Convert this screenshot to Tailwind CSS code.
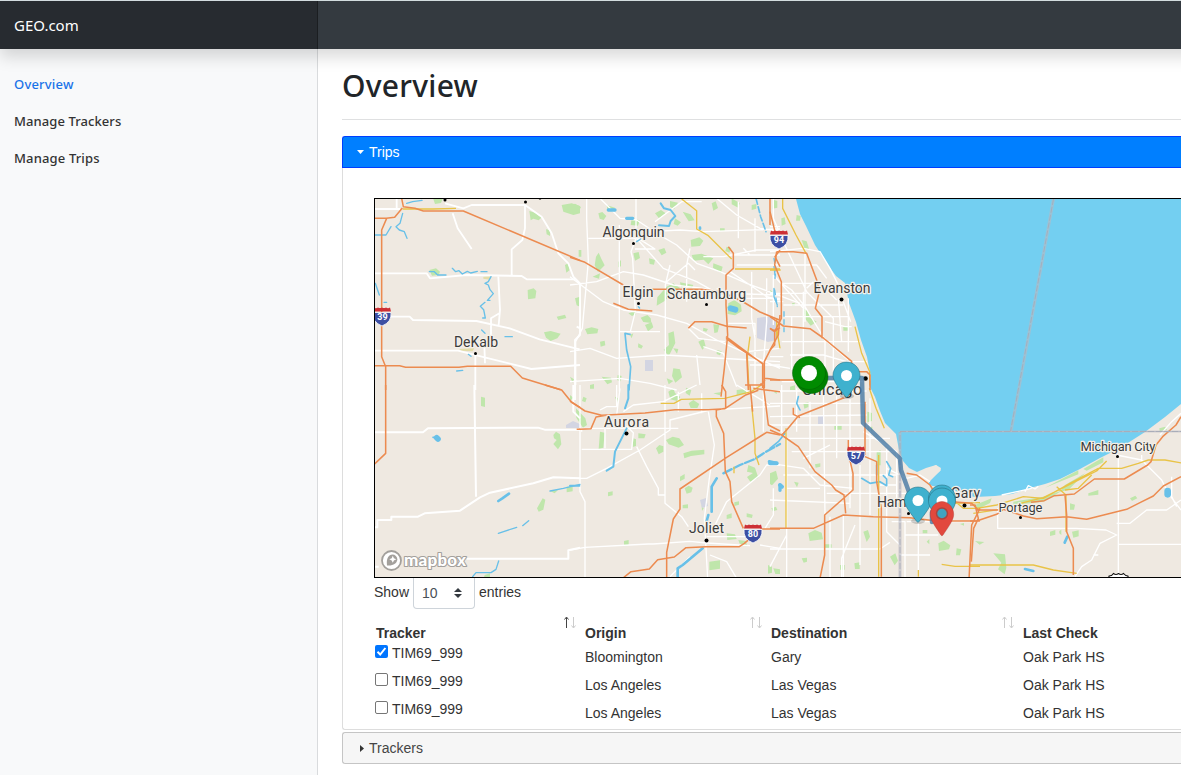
<!DOCTYPE html>
<html lang="en">
<head>
<meta charset="utf-8">
<title>GEO.com</title>
<script src="https://cdn.jsdelivr.net/npm/@tailwindcss/browser@4"></script>
</head>
<body class="w-[1181px] h-[775px] overflow-hidden bg-white flex flex-col font-['Noto_Sans',sans-serif] text-[#212529]">
<header class="relative z-10 w-[1240px] h-[49px] shrink-0 flex border-t border-[#d3dcdf] bg-[#343a40] shadow-[0_8px_16px_rgba(0,0,0,0.15)]">
  <div class="w-[318px] bg-[#272b30] border-r border-[#1b1e21] pl-[14px] flex items-center text-white text-[15px] pt-px"><span>GEO.com</span></div>
</header>
<div class="flex flex-1 min-h-0">
  <nav class="w-[318px] shrink-0 bg-[#f8f9fa] border-r border-[#d9dbdd] pl-[14px] pt-[17px] text-[13px] font-medium text-[#333]">
    <a class="flex h-[37px] items-center text-[#1a73e8] tracking-[0.2px]">Overview</a>
    <a class="flex h-[37px] items-center tracking-[0.08px]">Manage Trackers</a>
    <a class="flex h-[37px] items-center tracking-[0.15px]">Manage Trips</a>
  </nav>
  <main class="flex-1 min-w-0 pl-6">
    <div class="h-[71px] border-b border-[#dfe0e1] pt-[13px]"><h1 class="text-[30px] leading-[48px] font-medium tracking-[0.25px]">Overview</h1></div>
    <div class="mt-4 font-['Liberation_Sans',sans-serif] text-sm text-[#333]">
      <div class="h-8 bg-[#007fff] border border-r-0 border-[#003eff] rounded-tl-[3px] text-white flex items-center pl-[14px] gap-[5px]">
        <svg width="7" height="4" viewBox="0 0 7 4"><path d="M0 0h7L3.500 4z" fill="#fff"/></svg><span>Trips</span>
      </div>
      <div class="h-[562px] border-l border-b border-[#ddd] pt-[30px] pl-[31px] rounded-bl-[3px]">
        <div class="h-[380px] border border-r-0 border-black overflow-hidden">
        <svg class="block" width="806" height="378" viewBox="375 199 806 378" fill="none" stroke-linejoin="round">
          <rect x="375" y="199" width="806" height="378" fill="#efe9e1"/>
          <!-- parks -->
          <g fill="#bfe6ab">
            <g transform="translate(370 195) scale(.33333)">
              <path d="M575 30l30-5 25 8v22l-20 5-30-10zM478 48l18 5 18 15-8 8-16-5-8 5zM528 103l12 2v18l-10-5zM473 285l18-5 8 8-3 22-22 3zM585 210l10-5 4 20-10 8zM522 412l20-4 30 8-10 14-20 8-14-10zM560 365l25-6 4 10-24 6zM615 310l15-5v30l-10-4zM626 165h8v20h-8zM178 225l20-5 12 10-4 10-20 2zM190 12h28l-5 12-18 3z"/>
              <path fill="#e3dda9" d="M268 462l45-3-5 10-35-2zM340 245l25-3-5 12-20-3z"/>
            </g>
            <g transform="translate(570 195) scale(.33333)">
              <path d="M0 32l15-6 18 10-8 16-25 3zM85 55l12-4 12 12-8 12-12-4zM110 30l25 8-6 10-17-5zM185 70l24 6-5 16-22-2zM255 55l18-10 14 10-20 15zM300 18l24 5-12 20-12-8zM338 50l24 8 12 18-18 3zM315 70l18 12-10 10-12-5zM362 135l26-8 12 10-10 16-26 2zM365 180l30-4 35 14-15 18-14-14-30 3zM265 165l18-6 6 14-14 8zM190 175l16-4 4 18-15 8zM145 200l8-4v18l-8 3zM78 185l8-12 8 18 10 20-20 20-10-20zM68 245l22-10-3 16zM237 190l18 5-3 14-13-2zM425 25l12-6 7 20-14 8zM450 100h14v8h-14zM485 10l24 14-4 14-20-10zM470 155l14 4-6 14-12-5zM545 30l14-3v14l-14 4zM430 205l28 10-5 18-24-15zM290 275l20-10 20 14-8 25-18-10-20 24-24 14 2-25zM330 262l40 8-5 10-32-4zM475 325l18-10 20 14 2 20-20 12-22-4zM470 340l8-15 10 8zM45 402l20-5 20 5-3 13-30 3zM212 368l20-8 10 10 2 14-24-3zM225 390l20-8 5 15-16 12zM175 355l18-5 5 8-12 5zM180 420l10-5-5 15zM295 415l16-6 5 35-20 40-15-20 16-14zM310 460l15 2-4 14zM90 440l14-3 2 14-14 4zM205 445l14 8-5 8-10-4zM385 440l16-8 6 22-10 10zM430 388l18 2-5 22-10 2zM400 398l14 4-5 8-10-3zM440 465l15 4-5 12-10-4zM95 545l28 3 3 14-14 6zM143 540l12 3-4 16-10-4zM310 520l20 3 6 24-20 16-10-20zM290 550l20 8-14 10zM60 570l12-3v14h-12zM0 545l12 8-4 10z"/>
            </g>
            <g transform="translate(770 195) scale(.33333)">
              <path d="M10 14l12 4v20l-14 3zM34 70l10-3 3 20-12 5zM80 60l12 3-2 14h-12zM95 135l15 4 8 25-14-3zM98 338l16 10 6 20 20 12-18 12-16-20zM220 395l14 2v10h-14zM66 325l8-2v10h-8zM273 425h12v5h-12zM60 575l15-4v14h-15zM0 285l8 5-5 14z"/>
            </g>
            <g transform="translate(970 195) scale(.33333)">
              <path d="M15 930l50-20-5 14-40 20zM130 920l90-15 60-20-60 35-90 10zM225 878l100-52v12l-100 40zM340 822l60-35v15l-50 25zM285 870l60-35-50 50-25 5zM355 895l30-10v14l-30 3zM300 925l15 4-3 15h-12zM240 1010l16-5v14l-16 4zM268 1008l6-4v16l-6-5zM306 1010l20-4v18l-16 4zM480 910l16-8 6 8-16 8zM568 700l18-5 5 10-22 3zM70 1075l35 3 4 40-5 20-20-15 10-20zM15 1038l28 3-14 8z"/>
            </g>
            <g transform="translate(370 385) scale(.33333)">
              <path d="M333 35l12 3v28l-12-3zM550 150l8-10 12 8 4 30-10 15-14-16 10-12-8-5zM518 340l8 4-6 30-14 6-5-10zM540 318l24-3-10 10zM590 305h18v14l-18 3zM600 30l10 8-10 10zM344 570l16-5v12h-18z"/>
            </g>
            <g transform="translate(570 385) scale(.33333)">
              <path d="M18 70l28 30 5 20-12 8-20-30zM40 35l10 5-4 12-10-4zM90 140l14 3-4 45-14 4zM135 35l10 5-4 14zM205 145l22 3-4 12h-18zM190 160l8 3v20l-10 3zM288 165l20-10 20 5 14 20-16 8-30-10zM258 190l10-10 12 4v16l-14 8zM340 205l25-8 38-3v14l-40 5-20 7zM295 20l15-10 5 14 16 12-10 12-20-5zM348 8l16 8-5 16-12-8zM370 45l18 12-6 12h-20l-6-14zM430 25l25-4-6 10zM500 15l28-3v14l-28 4zM610 20l10-3v10zM330 275l14-8v14l-14 8zM344 310l12-8 12 6-4 14-14 4zM338 360l16-2v12h-16zM114 322l14-3v12l-14 3zM162 468l14-3v14l-14 3zM418 530l32-4v25l-32 5zM470 390l15-5v14l-15 3zM530 385l18 4-2 10-16-3zM493 352l14-3v10l-14 4zM470 445l25 3 5 14-28 3zM505 465l22 3 4 12-22-4zM535 240l20 8 10 30-24 12-10-14 18-12-18-4zM395 360l6 10-5 8zM594 540l12 5v18l-12 3zM610 550l20 3v14h-14z"/>
            </g>
            <g transform="translate(770 385) scale(.33333)">
              <path d="M100 55l15-3v14l-12 5zM193 122h22v12h-22zM292 80l14 4v24l-14 4zM295 125h12v12h-12zM135 238l16-3v10l-14 3zM115 445l20-10 20 8 4 20-40 5zM280 440l14-5 6 20-10 16zM0 265l18-8 6 24-18 20-6-4zM165 478h20v10h-20zM72 290l14 3-5 14zM4 370l14-5 4 10-14 4zM95 520l16-2v12l-10 3zM253 535l16-3v20h-14zM210 540h14v14h-14zM505 475l16-8 20 14-4 12-30 5zM458 435h14v10h-14zM560 490l14 3-4 18h-12zM470 470l8-8v16zM360 515l16-10 8 22-10 14zM320 200l12-4v45h-12zM570 417l12-3v8zM375 350l20 5-10 10z"/>
            </g>
          </g>
          <g fill="#d3d5e2">
            <path d="M757 318l15-2 4 6v18l-8 2-11-4zM645 360h8v11h-8zM566 425l7-4 7 3v4h-14zM700 500l6-2 2 8-6 2zM818 416h6v8h-6z"/>
          </g>
          <!-- lake -->
          <path fill="#73cff1" d="M796 199L800 214 806 226 815 245 828 265 836 276 845 283 849 303 856 322 861 340 867 357 871 378 869 385 875 397 880 411 885 423 896 434 899 450 903 461 909 468 917 472 926 468 936 465 941 470 932 479 925 485 940 487 952 488 960 494 975 497 995 496 1012 494 1030 488 1045 484 1060 479 1080 469 1100 458 1120 448 1145 432 1165 417 1181 404V199z"/>
          <path fill="#efe9e1" d="M914 472l11 3 4-6 7-4 5 3-1 3-7 6-5 7 9 4-10 4-8-6z"/>
          <!-- local roads -->
          <g stroke="#fff" stroke-width="4">
            <g transform="translate(370 195) scale(.33333)">
              <path stroke-width="5.500" d="M14 42H90M80 10v32M225 25l55 15 25-10 160 0 50 35 30 50 20 60 30 30 15 40 20 20v155l-15 15v180M248 55l15 45 42 62M465 30v70l-8 35-32 28v80M14 235H170l10 15 110-10 165 3 15 10 145 0M385 245l5 100-4 45M14 365h105l10 10 190 3 100 22 90 33 120 30M14 467h250l80 20 140 35 146-12M345 505l-2-55 20-30v-50l25-15M316 475v110M620 395l12 6"/>
            </g>
            <g transform="translate(570 195) scale(.33333)">
              <path d="M198 10v120l-15 40 5 20 8 160-15 60h-30M148 90v500M0 245l100 75 60 25 100 15 90 25 90 50 190 85M0 470l60-10 80 30 145-10 345 20M0 560l150-10 90 15 80 20M10 10h120M90 10l60 60 50 5 60 40 60 35 60 55 70 25 80 35 160 60M50 10v60l5 130-18 200-20 40v130M0 270l80-10 80-30 60 10 90 30 90 10 60 15 170 5M200 130l80 90 100 40 90 50M55 130h150l50 32h-60M255 80l80-60h60M240 110l90-5 70 5 230-8M505 20v110M360 160l-10 50v110M300 210l-14 60v260M285 265l70-60 20 20M440 10l60 50 70 40 60 10M400 185h60l100-20 70 0M480 230l60 40 50 35 40 10M480 180h80M555 70v100M590 250v130l-10 130M545 230v140l10 60v160M610 240v150M470 290l50 20h110M520 160l20 20h90M500 210h130M475 385h80v35M355 400l30 30 80 10M400 455l60 20 40 100M150 410l120 0M440 280l30 10M530 470l100-10M540 510h90M380 480l10 90"/>
            </g>
            <g transform="translate(770 195) scale(.33333)">
              <path d="M10 10v60l30 70 70 150 80 80v160M0 170l100-10 50 10 30 50 30 60M30 95H0M105 170v210M0 295h110M30 210h110l30 40M30 265l120 0 50 50M35 265l30 20 40 50 60 100 70 60M40 330h180M0 320h40M40 365h195M65 365v160M100 290v290M205 310l10 130M35 440h235M235 310v160M165 380l60 15h20M60 480h100l70 20h60M0 510l60 10M35 560h245M0 485h40M165 430v150M130 260l-20 20M10 240l90 100M220 320l22 60"/>
            </g>
            <g transform="translate(970 195) scale(.33333)">
              <path stroke-width="4" d="M570 720l35-40 28-25M83 940v60h235l90 5 32 15-50 25-25 50-30 20-20 30M445 790v370M440 780l75 15 60 60 20 40 38 50M440 985h40l50-40h60l43-30M445 1048h188M605 845v60l15 30M515 780v20M95 900l90-20M370 1080h15M165 890l10-18 20 10 10-8"/>
            </g>
            <g transform="translate(370 385) scale(.33333)">
              <path stroke-width="6" d="M14 142h145l15-12 330-2 20 6h106M313 0l5 335M14 427h8v-22h42v-10h80l20-10 106-8 60-40 30-14 130-28 60-18 80 3M290 521h305v-25l35-8M610 0v80l20 20M14 545h12"/>
            </g>
            <g transform="translate(570 385) scale(.33333)">
              <path d="M0 280h50l60-30 100-55 90-60 0-30 60-15 60-15 210-12M30 0v320l15 30v230M35 140v-10h290M35 193h150l5-50-20-20M105 110v80M285 0v355l50 40 20 30M200 185l30 60 35 65v20h22M90 75l20-10h30v-65M160 80l30-20 90-10 100-50M415 80l18 100-15 100-15 120 10 180M0 495l45-8 190-10h15l110-8 50 5 130 8M420 510l50 20 30 50M360 515l-60 60M430 430l40-80 100-80 20-30 40 0M585 430l25-40v-80M580 10v130M500 0l100 60M395 25v60M410 455h115M570 480l60 10M325 20v60M150 10l-10 80"/>
            </g>
            <g transform="translate(770 385) scale(.33333)">
              <path d="M35 0v140l15 20v430M0 55h290M0 18h290M80 10v130M0 95l290-5M120 50v200M0 120h300M160 20l5 370M200 20v200M240 40v330M0 235l100 15 50 50 100 10M40 270h340M50 310h100M50 160h310M65 200h310M100 220l60-30 20-10M0 345l240 10M170 325h240M220 390v195M255 420l-40 100v65M50 450l-50 95M0 492h330l30-20M270 240v300M300 40v350M350 190v210M380 260v100M365 410h40v170M445 410v170M405 450h100M390 510h90M350 250l60 30 40-10 30 20M410 410l220 0M350 400v40l40 40M180 395v190M330 300h50M280 140l100 60v80"/>
            </g>
          </g>
          <!-- rivers and ponds -->
          <g stroke="#68c0e8" stroke-width="4" stroke-linecap="round">
            <g transform="translate(370 195) scale(.33333)" stroke-width="4"><path d="M110 25l18-5 28-4M98 55l-8 30-12 10 10 10 15 5 8 20M16 120h32l15-25M16 265l12 35M178 230l15 0 10 10h25M247 220l10 10 10-3 10 10 15-8 10 5 20-5M333 230h18M363 245l-8 15-10 5 10 5 5 14 10 12-18 20 8 0M345 322l-14 12 10 10 5 25-8 0M335 405l10 10M405 425h22M295 478l8 6M260 528l18-2M42 322h8"/></g>
            <g transform="translate(570 195) scale(.33333)"><path d="M272 25l10 15 20 5 14 18-14 15-5 15-30-2" stroke-width="6"/><path d="M180 418l-15-3 5 50 12 50-5 70" stroke-width="5"/><path d="M558 10l14 55 16 45" stroke-width="5" stroke-dasharray="18 8"/><path d="M115 45h20M170 70h18" stroke-width="10"/><path d="M482 340l14 4" stroke-width="18"/><path d="M390 98v3" stroke-width="8"/><path d="M200 140l12-8M205 335l4 4M612 215l3 25M612 280v25l10 25"/></g>
            <g transform="translate(770 195) scale(.33333)" stroke-dasharray="14 10"><path d="M12 190l5 30-2 30M14 285l8 50M42 350v60"/></g>
            <g transform="translate(370 385) scale(.33333)"><path d="M200 158l4 4" stroke-width="17"/><path d="M189 157l12 0" stroke-width="5"/><path d="M385 348l12-8 20-14" stroke-width="8"/><path d="M385 445l55-18M458 422l18-15M540 318l40-8 50-12M308 575l10-12h45l15-10 8-25"/></g>
            <g transform="translate(570 385) scale(.33333)"><path d="M175 0v40l-10 30M170 130l-35 70-5 45-20 12M0 302h28" stroke-width="6"/><path d="M460 265l50-25 45-18 30-20 45-25" stroke-dasharray="28 8" stroke-width="7"/><path d="M440 280l-15 25 0 75M415 390l-5 18M398 490l-60 50-15 10v28" stroke-width="8"/><path d="M598 230l22 5M630 300v16" stroke-width="10"/></g>
            <g transform="translate(770 385) scale(.33333)"><path d="M0 190l25-20 20-25M85 35l-5 20 10 20M275 280l25 15 30-5 20 12v-20l-10-10M320 240v30M350 230l12 20-6 20 12 5" stroke-width="5"/><path d="M0 235h20M30 300l6 5" stroke-width="12"/></g>
            <g transform="translate(970 195) scale(.33333)"><path d="M593 888v10" stroke-width="20"/><path d="M292 1025l-8 18M165 1122l25 6" stroke-width="8"/></g>
          </g>
          <!-- secondary highways -->
          <g stroke="#e9c347" stroke-width="4">
            <g transform="translate(370 195) scale(.33333)"><path d="M98 42h90l70-2"/></g>
            <g transform="translate(570 195) scale(.33333)"><path d="M335 12l45 35v55l35 20 70 70M495 222h135M540 425l-8 60 5 100M620 370v60"/></g>
            <g transform="translate(770 195) scale(.33333)"><path d="M38 10v30l40 80 30 55M255 395l20 80 24 55v40M0 225h32M20 400l10 60"/></g>
            <g transform="translate(970 195) scale(.33333)"><path d="M20 940l60-10 80-25 60 5 80-45 85-45h70l50-15 30-10 50 0 68 12M10 955l80-12 70-20 60-15 60-30 100-50 30-30M260 875l28 25v110M0 1110h190l60 15 70 10M285 885l40-5 40-40"/></g>
            <g transform="translate(570 385) scale(.33333)"><path d="M272 55h40l22-12 130-3 80-20 30-20M545 60l10 100v45l12 35M492 245v20"/></g>
            <g transform="translate(770 385) scale(.33333)"><path d="M48 130v300M326 210v365M298 10l20 60 25 60M515 538l40 6h75M445 555v20M550 345l30 25h50M550 355l80-2"/></g>
          </g>
          <!-- primary highways -->
          <g stroke="#ec8b50" stroke-width="4.600">
            <g transform="translate(370 195) scale(.33333)"><path d="M95 10l5 25 35 5 25 8h120l350 148M14 70h35l25-3 23-28M50 70L35 105v380l12 30v70M14 512h75l18 5h160l25-3h130l35 35 115 35"/></g>
            <g transform="translate(570 195) scale(.33333)"><path d="M0 187l45 15 115 68M240 283h155l60 8 65 30 50 30 60 25M130 325l45 18 72 5M355 400l20-20h50l45 14 60 5M475 155l15 20v45l-22 20v90l5 90-10 100-10 85M468 430l40 30 70 45v75M468 425l70 52 40 30M630 360l-5 60-22 40-20 40v80M585 550l45 5M600 10v80M630 165l-15 20 15 30M530 475l5 110M525 570h50l10-15M600 400l15 8 15-10"/></g>
            <g transform="translate(770 195) scale(.33333)"><path d="M0 50l15 60M20 170h50l40 5 30 80 8 35-12 50 20 25v65M20 170l-6 40 20 50v110l-20 40v40l-14 15M0 365l40 28 80 8 40 28 85 70v30M0 555l80 0M250 530h40l10 10v45M0 400l10 8 15-8"/></g>
            <g transform="translate(970 195) scale(.33333)"><path d="M0 978h20l60-20 20-15 60 20 40 8 90-6 60 8 60-15 60-15 40-20 40-20 30-30 53-28M633 665l-15 25-40 35-20 25-15 50-10 10-70 42h-90l-60 45-60 5-30 15-40 5M0 930h15l10 40-14 30-7 100M20 945h70M285 900l5 60v50l20 50v80"/></g>
            <g transform="translate(370 385) scale(.33333)"><path d="M47 0v205L14 237M525 0l50 15 20 25 10 12 25 15M620 133h10"/></g>
            <g transform="translate(570 385) scale(.33333)"><path d="M0 48l45 30 50 13 130-7 90-10 100 0 50-3 60-40 40-15M28 133l35-2 15-35 30-5M455 0l12 20v50l-28 5v20l22 50 5 115 14 30 5 60 35 80M570 0l5-5M540 0l8 80M580 0l15 120 35 18M630 150l-40-8-120 75-140 95v60l-20 30-20 100v80M158 580l25-20 55-8 25-28 50-8 35-28 60-3h100l15-10 35-30M570 432h60M630 20l-80-10"/></g>
            <g transform="translate(770 385) scale(.33333)"><path d="M0 135l35 15 15-15 35-42 100-40 50-20M70 68v20l20 10M35 150l50 35 50 75 50 40 12 15 25 15 5 55M0 430h130l90-40 90 5 110 3 80 10 130 0M235 165v40l14 60v50l-85 75v120l-15 75M285 50v160M250 200l70 30v60l14 80v205M410 265l30 5 40 30 30 50M545 350l60 5 20 20M630 370l-25 50-8 165"/></g>
          </g>
          <!-- state borders -->
          <g stroke="#b7b9c3"><path stroke-width="3" opacity=".6" d="M1053.500 199l-42.500 232.500M900 577V432"/><path stroke-width="1.500" d="M900 431.500H1181"/><path stroke="#a3a8b5" stroke-width=".7" stroke-dasharray="6 2" d="M1053.500 199l-43 232.500M900 431.500h281M900 577V432"/></g>
          <!-- place labels -->
          <g font-family="Roboto, sans-serif" font-size="14" fill="#3b3b3b" stroke="#f4f0ea" stroke-width="2.500" paint-order="stroke">
            <text x="602.500" y="237" textLength="62">Algonquin</text>
            <text x="622.500" y="297" textLength="31">Elgin</text>
            <text x="667" y="298.500" textLength="79">Schaumburg</text>
            <text x="813.500" y="293" textLength="57">Evanston</text>
            <text x="454" y="347" textLength="44">DeKalb</text>
            <text x="604" y="427" textLength="45">Aurora</text>
            <text x="689" y="533" textLength="35">Joliet</text>
            <text x="802" y="395" font-size="16" textLength="60">Chicago</text>
            <text x="877" y="507" textLength="65" font-size="14">Hammond</text>
            <text x="951" y="498" textLength="29">Gary</text>
            <text x="998.500" y="511.500" textLength="44" font-size="13">Portage</text>
            <text x="1080.500" y="450.500" textLength="75" font-size="13">Michigan City</text>
          </g>
          <g fill="#000"><circle cx="445" cy="200" r="1.500"/><circle cx="525.500" cy="202" r="1.500"/><circle cx="540" cy="198" r="1.500"/><circle cx="633.500" cy="243.500" r="1.500"/><circle cx="638.500" cy="303.500" r="1.500"/><circle cx="706.500" cy="304.500" r="1.500"/><circle cx="841.500" cy="299.500" r="2"/><circle cx="475.500" cy="353.500" r="1.500"/><circle cx="626.500" cy="433.500" r="2"/><circle cx="706.500" cy="540.500" r="2"/><circle cx="865.500" cy="378.500" r="2.300"/><circle cx="908.500" cy="513.500" r="1.500"/><circle cx="964.500" cy="505.500" r="2"/><circle cx="1020.500" cy="517.500" r="1.500"/><circle cx="1117.500" cy="456.500" r="1.500"/></g>
          <path stroke="#111" stroke-width="1.200" fill="#fff" d="M1109 578v-2q3 0 4.500-2.500 2.500 2 5 0 2.500 2 5 0 2 2.500 4.500 2.500v2"/>
          <!-- interstate shields -->
          <defs>
            <g id="shield"><path fill="#3d4fa3" stroke="#fff" stroke-width=".8" d="M-9-3.500H9Q10 6 0 10-10 6-9-3.500z"/><path fill="#cd2f35" d="M-8-8.500q2 1.500 4 0 2 1 4 0 2 1 4 0 2 1.500 4 0l1 4H-9z"/></g>
            <path id="pin" d="M13.500 0C6.040 0 0 6.040 0 13.500C0 19.220 6.750 27 12.250 34.500C12.980 35.500 14.020 35.500 14.750 34.500C20.250 27 27 19.070 27 13.500C27 6.040 20.960 0 13.500 0z"/>
          </defs>
          <use href="#shield" x="382" y="316"/><use href="#shield" x="779" y="239"/><use href="#shield" x="856" y="455"/><use href="#shield" x="753" y="533"/>
          <g font-family="Roboto, sans-serif" font-weight="700" font-size="9" fill="#fff" text-anchor="middle"><text x="382.500" y="320">39</text><text x="779" y="243">94</text><text x="856" y="459">57</text><text x="753" y="537">80</text></g>
          <!-- route -->
          <path stroke="#4678a4" stroke-opacity=".8" stroke-width="4.500" stroke-linecap="round" d="M820 378H862L863 423 900 458.500 901 470 909 492M932 522V512"/>
          <!-- trip markers -->
          <g stroke="#005f00" stroke-opacity=".5"><circle cx="811.500" cy="377" r="16.500" fill="#008000"/><circle cx="809" cy="373" r="16.500" fill="#008b00"/></g>
          <circle cx="809" cy="373" r="8" fill="#fff"/>
          <g stroke="#256d80" stroke-opacity=".55" fill="#3fb1ce">
            <ellipse cx="847" cy="396" rx="7" ry="3" fill="#000" fill-opacity=".18" stroke="none"/>
            <ellipse cx="918" cy="521" rx="7" ry="3" fill="#000" fill-opacity=".18" stroke="none"/>
            <use href="#pin" transform="translate(833 362)"/>
            <use href="#pin" transform="translate(904.500 487)"/>
            <use href="#pin" transform="translate(928.500 485)"/>
            <use href="#pin" transform="translate(928.500 488)"/>
          </g>
          <g fill="#fff"><circle cx="846.500" cy="375.500" r="5.500"/><circle cx="918" cy="500.500" r="5.500"/><circle cx="942" cy="501" r="5.500"/></g>
          <use href="#pin" transform="translate(930.200 501.500) scale(.87 .97)" fill="#e2483d" stroke="#a8322c" stroke-opacity=".4"/>
          <circle cx="942" cy="513.500" r="5.500" fill="#3fa3be" stroke="#a9443e" stroke-width="1.500"/>
          <!-- attribution -->
          <g><circle cx="391.500" cy="560.500" r="9.500" fill="#fff" stroke="#a3a09c" stroke-width="1.800"/><path fill="#a3a09c" d="M387 565.500C386 558.500 388.500 554.500 392.500 554.500A4.800 4.800 0 0 1 397.300 559.300C397.300 563.500 393 566 387 565.500z"/><path fill="#fff" d="M392.800 555.800l1.100 2.400 2.400 1.100-2.400 1.100-1.100 2.400-1.100-2.400-2.400-1.100 2.400-1.100z"/>
          <text x="404" y="566" font-family="Lato, sans-serif" font-weight="900" font-size="17" textLength="62" fill="#fff" stroke="#a3a09c" stroke-width="2.200" paint-order="stroke">mapbox</text></g>
        </svg>
        </div>
        <div class="flex h-[31px] gap-1">
          <span class="leading-[28px]">Show</span>
          <span class="w-[62px] h-[31px] border border-t-0 border-[#ced4da] rounded-b-[4px] flex items-center justify-between pl-2 pr-3 text-[#495057]">10
            <svg width="8" height="10" viewBox="0 0 8 10" fill="#343a40"><path d="M0 4h8L4 0zM0 6h8L4 10z"/></svg></span>
          <span class="leading-[28px]">entries</span>
        </div>
        <div class="grid grid-cols-[209px_186px_252px_1fr] pl-0.5 mt-[5px]">
          <div class="flex justify-between h-[28px] pr-[8px] font-bold"><span class="pt-[9px]">Tracker</span><svg width="14" height="16" viewBox="0 0 14 16" fill="none"><path d="M3.500 14V3.500M1.500 5.500l2-2.500 2 2.500" stroke="#444"/><path d="M10.500 3v10.500M8.500 11.500l2 2.500 2-2.500" stroke="#ccc"/></svg></div>
          <div class="flex justify-between h-[28px] pr-[8px] font-bold"><span class="pt-[9px]">Origin</span><svg width="14" height="16" viewBox="0 0 14 16" fill="none" stroke="#ccc"><path d="M3.500 14V3.500M1.500 5.500l2-2.500 2 2.500M10.500 3v10.500M8.500 11.500l2 2.500 2-2.500"/></svg></div>
          <div class="flex justify-between h-[28px] pr-[8px] font-bold"><span class="pt-[9px]">Destination</span><svg width="14" height="16" viewBox="0 0 14 16" fill="none" stroke="#ccc"><path d="M3.500 14V3.500M1.500 5.500l2-2.500 2 2.500M10.500 3v10.500M8.500 11.500l2 2.500 2-2.500"/></svg></div>
          <div class="pt-[9px] font-bold">Last Check</div>

          <div class="h-7 flex gap-1 -ml-px leading-5"><svg class="mt-[2px]" width="13" height="13" viewBox="0 0 13 13"><rect width="13" height="13" rx="2" fill="#0075ff"/><path d="M2.500 6.800l2.700 2.700 5.200-6.500" stroke="#fff" stroke-width="2" fill="none"/></svg>TIM69_999</div>
          <div class="leading-[28px]">Bloomington</div><div class="leading-[28px]">Gary</div><div class="leading-[28px]">Oak Park HS</div>
          <div class="h-7 flex gap-1 -ml-px leading-5"><span class="mt-[2px] size-[13px] border border-[#767676] rounded-[2px]"></span>TIM69_999</div>
          <div class="leading-[28px]">Los Angeles</div><div class="leading-[28px]">Las Vegas</div><div class="leading-[28px]">Oak Park HS</div>
          <div class="h-7 flex gap-1 -ml-px leading-5"><span class="mt-[2px] size-[13px] border border-[#767676] rounded-[2px]"></span>TIM69_999</div>
          <div class="leading-[28px]">Los Angeles</div><div class="leading-[28px]">Las Vegas</div><div class="leading-[28px]">Oak Park HS</div>
        </div>
      </div>
      <div class="mt-[2px] h-8 bg-[#f6f6f6] border border-r-0 border-[#c5c5c5] rounded-l-[3px] text-[#454545] flex items-center pl-[17px] gap-[5px]">
        <svg width="4" height="7" viewBox="0 0 4 7"><path d="M0 0v7L4 3.500z" fill="#333"/></svg><span>Trackers</span>
      </div>
    </div>
  </main>
</div>
</body>
</html>
